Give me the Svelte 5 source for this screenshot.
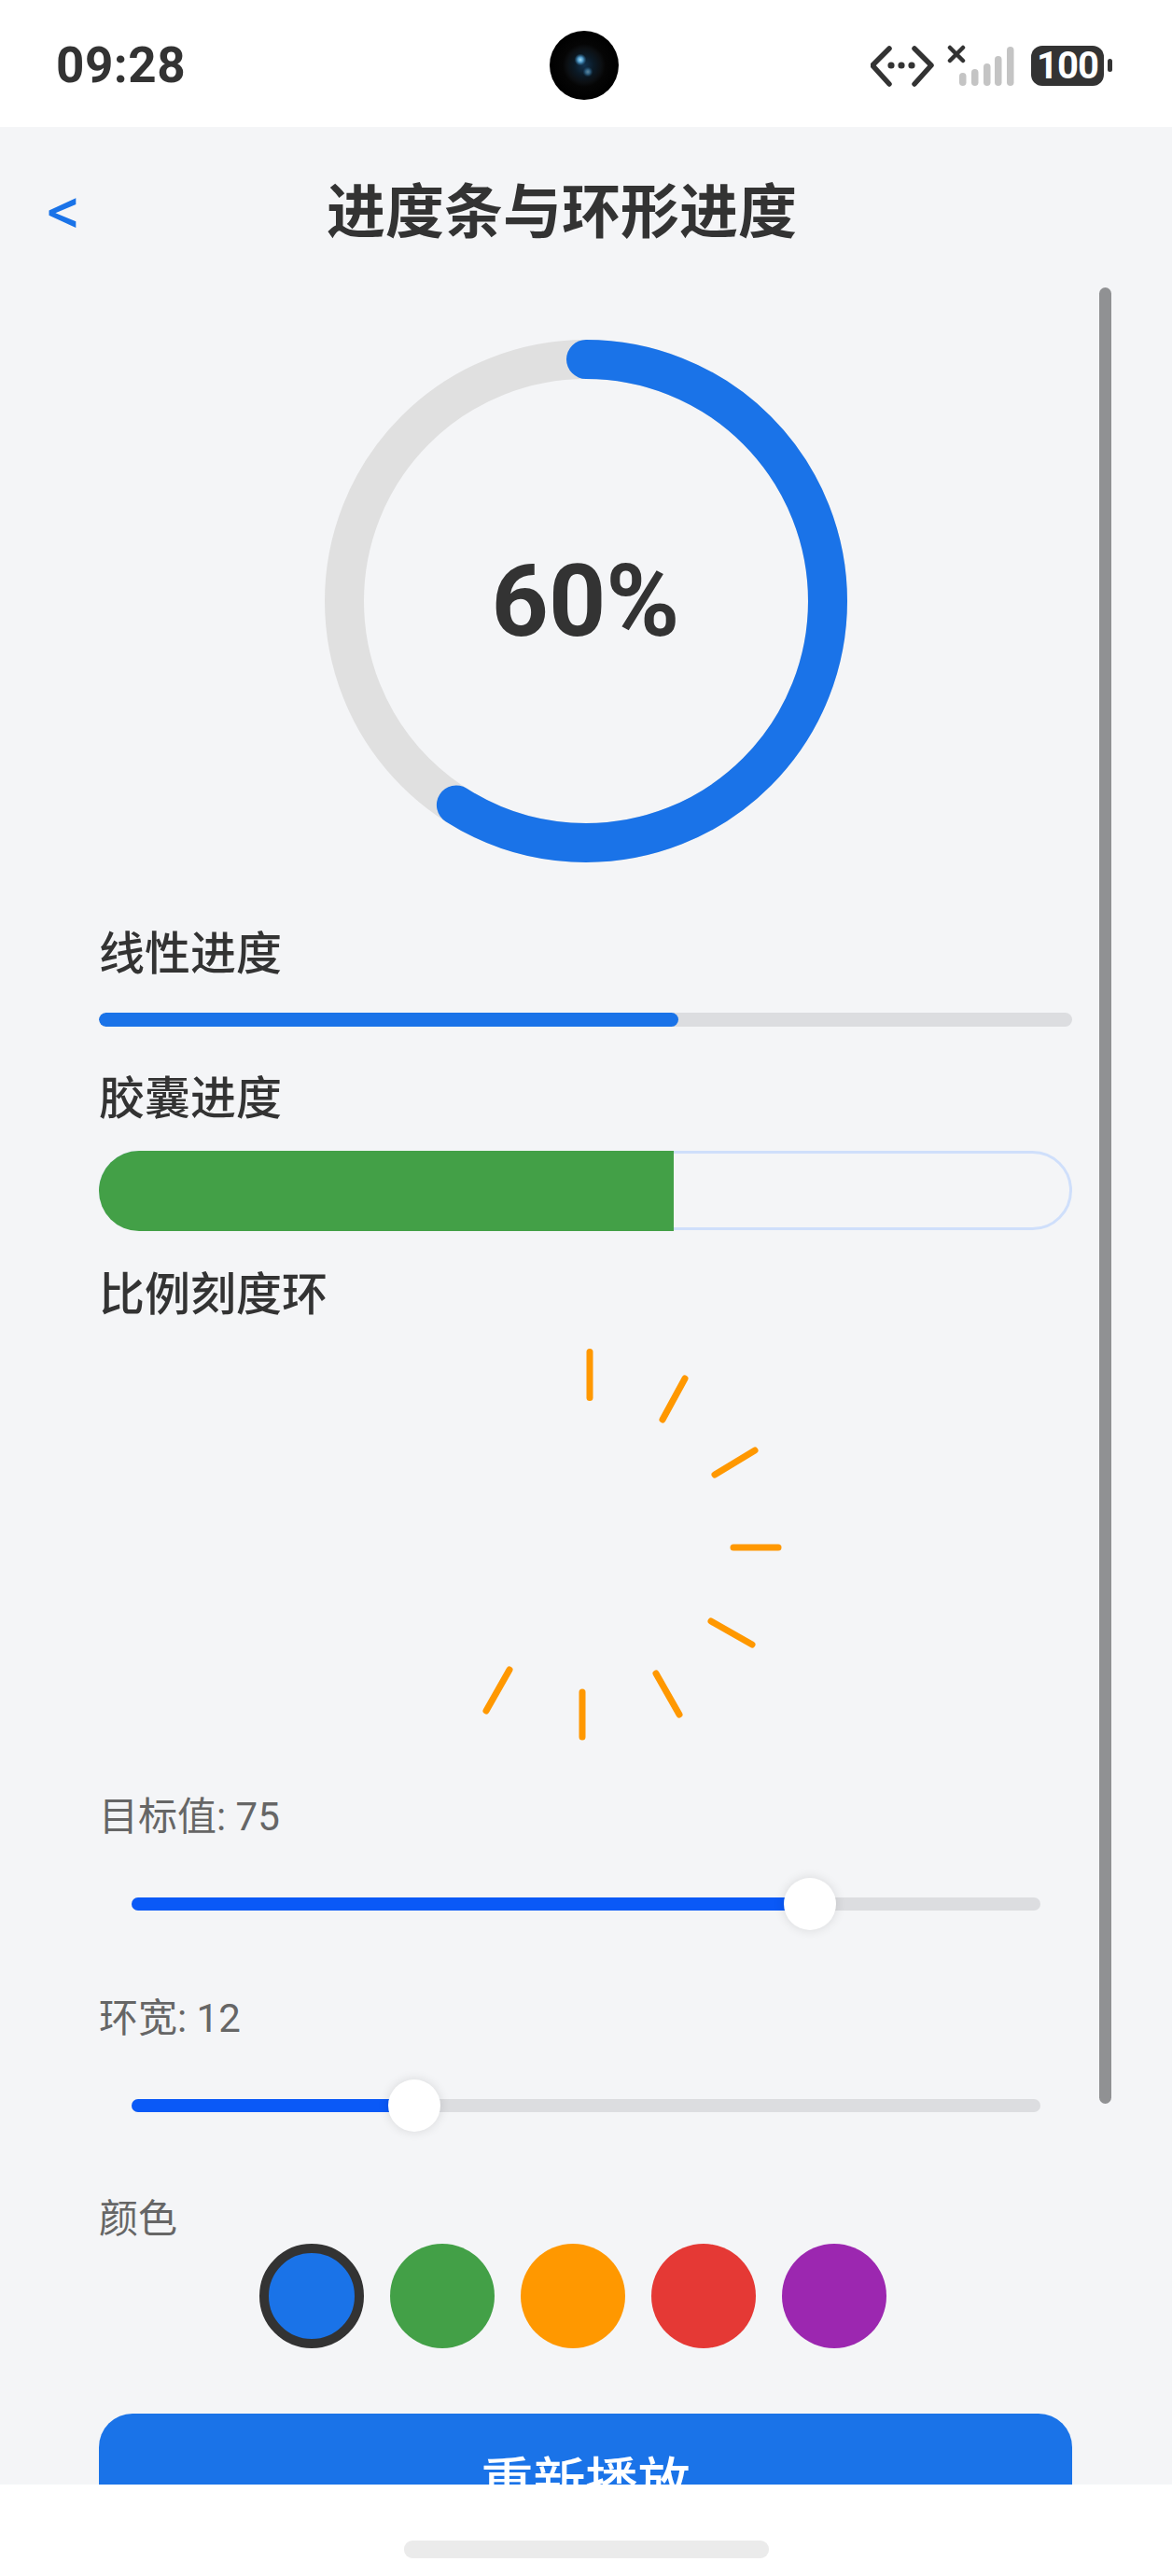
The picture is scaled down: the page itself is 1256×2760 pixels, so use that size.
<script>
  const progress = 60;
  const drawn = 59; // animation hasn't quite reached the value yet
  const radius = 259;
  const circumference = 2 * Math.PI * radius;

  // tick ends read off the canvas, relative to its top left corner
  const ticks = [
    [526, 27.5, 526, 76.5],
    [628, 56, 604, 100],
    [703, 133, 660, 159],
    [680, 237, 728, 237],
    [656, 316, 700, 341],
    [597, 372, 622, 416],
    [518, 392, 518, 440],
    [440, 368, 415, 412]
  ];

  const sliders = [
    { label: "目标值: 75", fill: 727 },
    { label: "环宽: 12", fill: 303 }
  ];

  const swatches = ["#1a73e8", "#43a047", "#ff9800", "#e53935", "#9c27b0"];
  const bars = [
    [1028, 78],
    [1041, 74],
    [1054, 68],
    [1066, 60],
    [1079, 50]
  ];
</script>

<div class="screen">
  <div class="status">
    <span class="time">09:28</span>
    <svg class="camera" width="74" height="74" viewBox="0 0 74 74">
      <defs>
        <radialGradient id="lens" cx="50%" cy="50%" r="50%">
          <stop offset="0" stop-color="#12324f" />
          <stop offset="0.28" stop-color="#0b1a26" />
          <stop offset="0.5" stop-color="#0c0f12" />
          <stop offset="0.62" stop-color="#050505" />
          <stop offset="1" stop-color="#000" />
        </radialGradient>
        <radialGradient id="glint">
          <stop offset="0" stop-color="#a5dcf5" />
          <stop offset="0.45" stop-color="#4d96c4" />
          <stop offset="1" stop-color="#2a6a96" stop-opacity="0" />
        </radialGradient>
      </defs>
      <circle cx="37" cy="37" r="37" fill="url(#lens)" />
      <circle cx="33" cy="31" r="6.5" fill="url(#glint)" />
      <circle cx="41" cy="44" r="5.5" fill="url(#glint)" opacity="0.55" />
    </svg>
    <div class="indicators">
      <svg width="70" height="46" viewBox="933 47 70 46" fill="none" stroke="#333" stroke-width="5.5" stroke-linecap="round" stroke-linejoin="round">
        <path d="M953 52L935 70L953 90" />
        <path d="M980 52L998 70L980 90" />
        <circle cx="955" cy="70" r="3.6" fill="#333" stroke="none" />
        <circle cx="966" cy="70" r="3.6" fill="#333" stroke="none" />
        <circle cx="977" cy="70" r="3.6" fill="#333" stroke="none" />
      </svg>
      <svg class="signal" width="76" height="46" viewBox="1014 47 76 46">
        <path d="M1018 51L1032 65M1032 51L1018 65" stroke="#333" stroke-width="4.5" stroke-linecap="round" />
        {#each bars as [x, y]}
          <rect {x} {y} width="7.5" height={92 - y} rx="3.75" fill="#c4c4c4" />
        {/each}
      </svg>
      <div class="battery">
        <span class="level">100</span>
        <span class="nub"></span>
      </div>
    </div>
  </div>

  <div class="page">
    <header class="nav">
      <span class="back">&lt;</span>
      <h1>进度条与环形进度</h1>
    </header>

    <div class="scroll">
      <div class="ring">
        <svg width="560" height="560" viewBox="0 0 560 560">
          <circle cx="280" cy="280" r={radius} fill="none" stroke="#e0e0e0" stroke-width="42" />
          <circle
            cx="280"
            cy="280"
            r={radius}
            fill="none"
            stroke="#1a73e8"
            stroke-width="42"
            stroke-linecap="round"
            stroke-dasharray="{(circumference * drawn) / 100} {circumference}"
            transform="rotate(-90 280 280)"
          />
        </svg>
        <span class="percent">{progress}%</span>
      </div>

      <div class="title first">线性进度</div>
      <div class="linear"><div class="linear-fill"></div></div>

      <div class="title second">胶囊进度</div>
      <div class="capsule"><div class="capsule-fill"></div></div>

      <div class="title third">比例刻度环</div>
      <svg class="ticks" width="1043" height="498" viewBox="0 0 1043 498">
        {#each ticks as [x1, y1, x2, y2]}
          <line {x1} {y1} {x2} {y2} stroke="#ff9800" stroke-width="7" stroke-linecap="round" />
        {/each}
      </svg>

      {#each sliders as s, i}
        <div class="field" class:next={i > 0}>{s.label}</div>
        <div class="slider">
          <div class="track">
            <div class="track-fill" style="width: {s.fill}px"></div>
            <div class="thumb" style="left: {s.fill}px"></div>
          </div>
        </div>
      {/each}

      <div class="field colors">颜色</div>
      <div class="swatches">
        {#each swatches as c, i}
          <span class="swatch" class:active={i === 0} style="background: {c}"></span>
        {/each}
      </div>

      <button class="replay">重新播放</button>
    </div>

    <div class="scrollbar"></div>
  </div>

  <div class="home"><span class="pill"></span></div>
</div>

<style>
  :global(body) {
    background: #fff;
  }

  .screen {
    width: 1256px;
    height: 2760px;
    display: flex;
    flex-direction: column;
    font-family: Roboto, "Noto Sans CJK SC", sans-serif;
    color: #333;
    overflow: hidden;
  }

  .status {
    height: 136px;
    flex: none;
    display: grid;
    grid-template-columns: 1fr auto 1fr;
    align-items: center;
    padding: 4px 64px 0 60px;
    background: #fff;
    box-sizing: border-box;
  }

  .time {
    font-size: 53px;
    font-weight: 700;
    letter-spacing: 0.5px;
  }

  .indicators {
    display: flex;
    align-items: center;
    justify-content: flex-end;
  }

  .indicators svg {
    display: block;
  }

  .signal {
    margin-left: 11px;
  }

  .battery {
    display: flex;
    align-items: center;
    margin-left: 15px;
  }

  .level {
    width: 78px;
    height: 43px;
    border-radius: 12px;
    background: #333;
    color: #fff;
    font-size: 40px;
    font-weight: 700;
    line-height: 43px;
    letter-spacing: -1px;
    text-align: center;
  }

  .nub {
    width: 5px;
    height: 14px;
    margin-left: 4px;
    border-radius: 3px;
    background: #333;
  }

  .page {
    position: relative;
    flex: 1;
    min-height: 0;
    display: flex;
    flex-direction: column;
    background: #f4f5f7;
    overflow: hidden;
  }

  .nav {
    height: 172px;
    flex: none;
    position: relative;
    display: flex;
    justify-content: center;
    padding-top: 53px;
    padding-right: 52px;
    box-sizing: border-box;
  }

  .nav h1 {
    margin: 0;
    font-size: 63px;
    font-weight: 700;
    line-height: 78px;
    color: #333;
  }

  .back {
    position: absolute;
    left: 50px;
    top: 45px;
    font-size: 72px;
    line-height: 92px;
    color: #1a73e8;
  }

  .scroll {
    flex: 1;
    min-height: 0;
    padding: 0 107px 0 106px;
    overflow: hidden;
  }

  .ring {
    position: relative;
    width: 560px;
    height: 560px;
    margin: 56px auto 0;
    display: flex;
    align-items: center;
    justify-content: center;
  }

  .ring svg {
    position: absolute;
    inset: 0;
  }

  .percent {
    position: relative;
    font-size: 107px;
    font-weight: 700;
    color: #333;
  }

  .title {
    font-size: 49px;
    font-weight: 500;
    line-height: 66px;
    color: #333;
  }

  .first {
    margin-top: 66px;
  }

  .second {
    margin-top: 45px;
  }

  .third {
    margin-top: 37px;
  }

  .linear {
    height: 15px;
    margin-top: 29px;
    border-radius: 8px;
    background: #dcdde0;
    overflow: hidden;
  }

  .linear-fill {
    width: 621px;
    height: 100%;
    border-radius: 8px;
    background: #1a73e8;
  }

  .capsule {
    position: relative;
    height: 85px;
    margin-top: 22px;
    border: 3.5px solid #cfdffb;
    border-radius: 43px;
    box-sizing: border-box;
  }

  .capsule-fill {
    position: absolute;
    left: -3.5px;
    top: -3.5px;
    bottom: -3.5px;
    width: 616px;
    border-radius: 43px 0 0 43px;
    background: #43a047;
  }

  .ticks {
    display: block;
  }

  .field {
    font-size: 42px;
    line-height: 56px;
    color: #666;
  }

  .field.next {
    margin-top: 30px;
  }

  .field.colors {
    margin-top: 30px;
    line-height: 53px;
  }

  .slider {
    height: 130px;
    display: flex;
    align-items: center;
    padding: 0 34px 0 35px;
  }

  .track {
    position: relative;
    flex: 1;
    height: 14px;
    border-radius: 7px;
    background: #dcdde0;
  }

  .track-fill {
    height: 100%;
    border-radius: 7px 0 0 7px;
    background: #0a59f7;
  }

  .thumb {
    position: absolute;
    top: 50%;
    width: 56px;
    height: 56px;
    border-radius: 50%;
    background: #fff;
    box-shadow: 0 0 12px rgba(0, 0, 0, 0.12);
    transform: translate(-50%, -50%);
  }

  .swatches {
    display: flex;
    justify-content: center;
    gap: 28px;
    padding-right: 28px;
  }

  .swatch {
    width: 112px;
    height: 112px;
    flex: none;
    border-radius: 50%;
    box-sizing: border-box;
  }

  .swatch.active {
    border: 10.5px solid #333;
  }

  .replay {
    display: block;
    width: 100%;
    height: 136px;
    margin-top: 70px;
    border: 0;
    border-radius: 36px;
    background: #1a73e8;
    color: #fff;
    font-family: inherit;
    font-size: 56px;
    font-weight: 500;
  }

  .scrollbar {
    position: absolute;
    left: 1178px;
    top: 172px;
    width: 13px;
    height: 1946px;
    border-radius: 7px;
    background: #909193;
  }

  .home {
    height: 98px;
    flex: none;
    display: flex;
    justify-content: center;
    padding-top: 60px;
    box-sizing: border-box;
    background: #fff;
  }

  .pill {
    width: 391px;
    height: 19px;
    border-radius: 9px;
    background: #ebebeb;
  }
</style>
